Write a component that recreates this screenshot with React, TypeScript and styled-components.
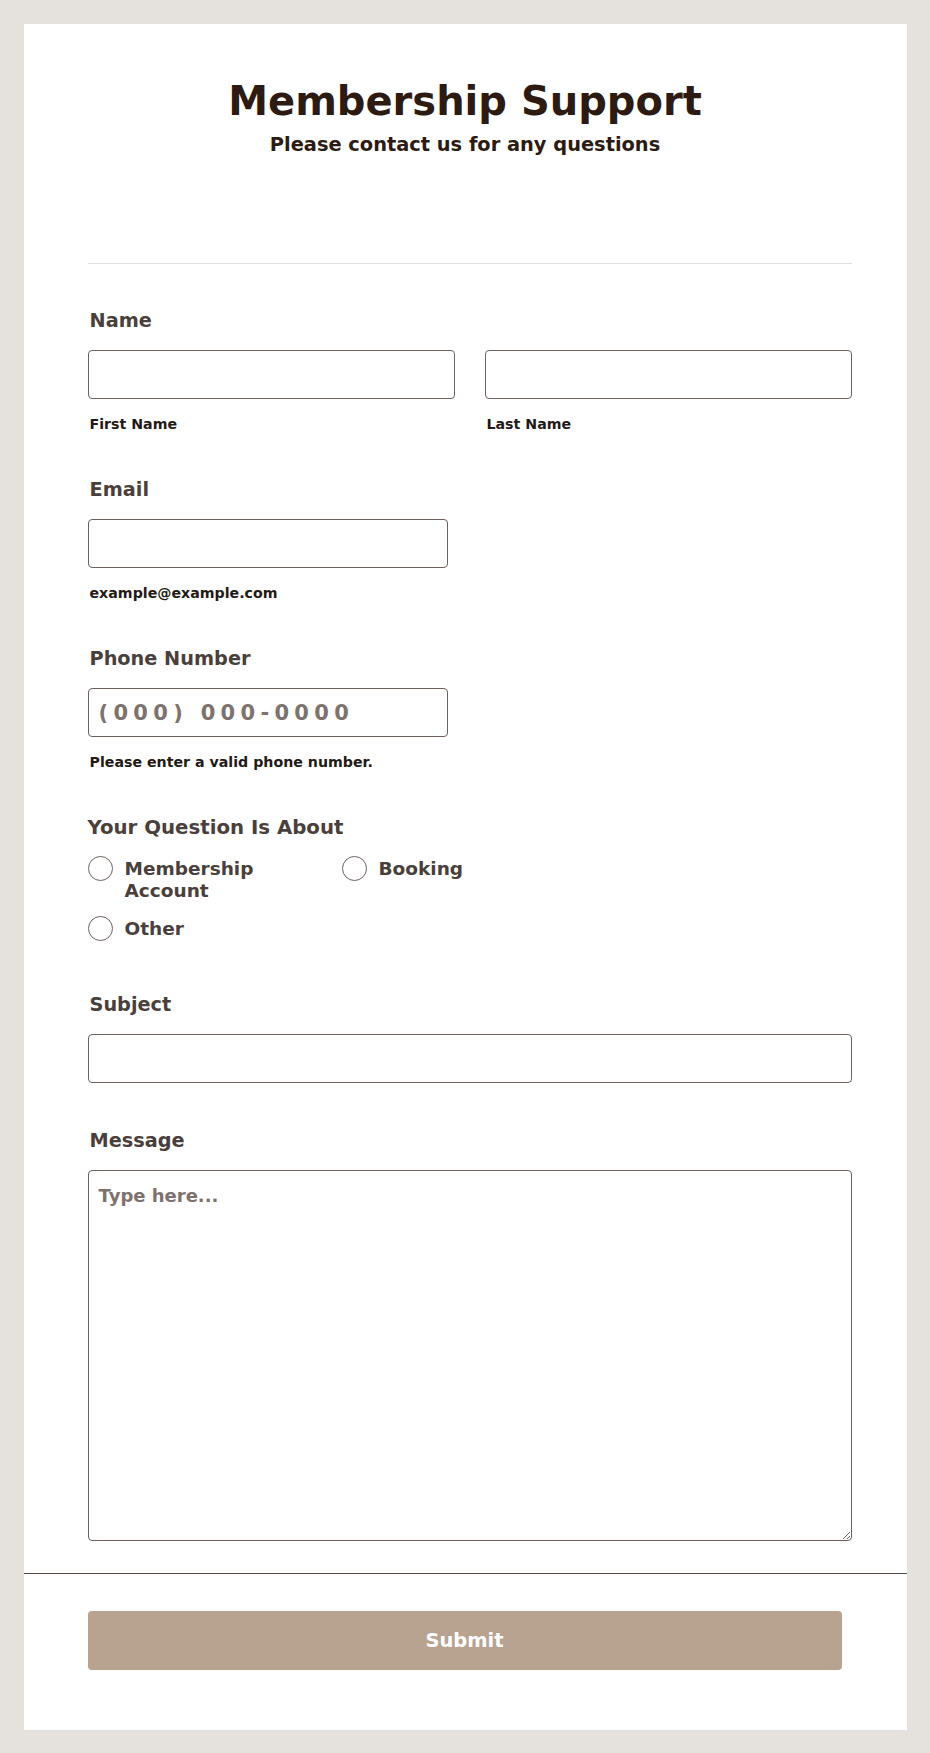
import React from "react";
import styled, { createGlobalStyle } from "styled-components";

const GlobalStyle = createGlobalStyle`
  html, body {
    margin: 0;
    padding: 0;
    background: #e5e1dd;
  }
  body {
    font-family: "DejaVu Sans", "Liberation Sans", sans-serif;
  }
  * { box-sizing: border-box; }
`;

const Page = styled.div`
  padding: 24px 0 24px;
`;

const Card = styled.div`
  width: 883px;
  margin: 0 auto;
  background: #ffffff;
  padding: 54px 0 60px;
`;

const Header = styled.header`
  text-align: center;
`;

const Title = styled.h1`
  margin: 0;
  font-size: 40px;
  line-height: 46px;
  font-weight: 700;
  color: #2d1b12;
`;

const Subtitle = styled.p`
  margin: 10px 0 0;
  font-size: 19.4px;
  line-height: 22px;
  font-weight: 700;
  color: #2d1b12;
`;

const HeaderDivider = styled.hr`
  border: none;
  height: 1px;
  background: #e3dfdc;
  margin: 107px 55px 0 64px;
`;

const Form = styled.form`
  display: flex;
  flex-direction: column;
  gap: 46px;
  padding: 46px 55px 0 64px;
`;

const Field = styled.div<{ $extraTop?: number }>`
  display: flex;
  flex-direction: column;
  margin-top: ${(p) => p.$extraTop ?? 0}px;
`;

const Label = styled.label<{ $flush?: boolean; $size?: number }>`
  display: block;
  font-size: ${(p) => p.$size ?? 19.3}px;
  line-height: 22px;
  font-weight: 700;
  color: #4a3f3b;
  padding-left: ${(p) => (p.$flush ? 0 : 2)}px;
  margin-bottom: 18px;
`;

const NameRow = styled.div`
  display: grid;
  grid-template-columns: 1fr 1fr;
  column-gap: 30px;
`;

const Column = styled.div`
  display: flex;
  flex-direction: column;
`;

const TextInput = styled.input<{ $width?: number }>`
  display: block;
  width: ${(p) => (p.$width ? `${p.$width}px` : "100%")};
  height: 49px;
  border: 1px solid #6d615d;
  border-radius: 4px;
  background: #fff;
  padding: 0 10px;
  font-family: "DejaVu Sans", sans-serif;
  font-size: 21px;
  font-weight: 700;
  letter-spacing: 5.3px;
  color: #2d1b12;
  outline: none;
  &::placeholder {
    color: #7d726d;
  }
`;

const SubLabel = styled.span`
  display: block;
  margin-top: 17px;
  padding-left: 2px;
  font-size: 14.2px;
  line-height: 17px;
  font-weight: 700;
  color: #231a16;
`;

const RadioGrid = styled.div`
  display: grid;
  grid-template-columns: 254px 254px;
  row-gap: 16px;
  margin-top: 1px;
  margin-bottom: 7px;
`;

const RadioItem = styled.label`
  display: flex;
  align-items: flex-start;
  gap: 12px;
  cursor: pointer;
`;

const RadioCircle = styled.span`
  flex-shrink: 0;
  width: 25px;
  height: 25px;
  margin-top: -2px;
  border: 1.5px solid #6d625e;
  border-radius: 50%;
  background: #fff;
`;

const RadioText = styled.span`
  max-width: 180px;
  font-size: 18.5px;
  line-height: 22px;
  font-weight: 700;
  color: #4a3f3b;
`;

const MessageArea = styled.textarea`
  display: block;
  width: 100%;
  height: 371px;
  border: 1px solid #6d615d;
  border-radius: 4px;
  padding: 14px 10px;
  font-family: "DejaVu Sans", sans-serif;
  font-size: 18px;
  line-height: 22px;
  font-weight: 700;
  color: #2d1b12;
  resize: both;
  outline: none;
  &::placeholder {
    color: #7d726d;
  }
`;

const FooterDivider = styled.hr`
  border: none;
  height: 1px;
  background: #5a4a45;
  margin: 32px 0 0;
`;

const SubmitButton = styled.button`
  display: block;
  width: 754px;
  height: 59px;
  margin: 37px 0 0 64px;
  border: none;
  border-radius: 4px;
  background: #b8a290;
  color: #ffffff;
  font-family: "DejaVu Sans", sans-serif;
  font-size: 19.5px;
  font-weight: 700;
  cursor: pointer;
`;

export default function App() {
  return (
    <>
      <GlobalStyle />
      <Page>
        <Card>
          <Header>
            <Title>Membership Support</Title>
            <Subtitle>Please contact us for any questions</Subtitle>
          </Header>
          <HeaderDivider />
          <Form onSubmit={(e) => e.preventDefault()}>
            <Field>
              <Label>Name</Label>
              <NameRow>
                <Column>
                  <TextInput type="text" aria-label="First Name" />
                  <SubLabel>First Name</SubLabel>
                </Column>
                <Column>
                  <TextInput type="text" aria-label="Last Name" />
                  <SubLabel>Last Name</SubLabel>
                </Column>
              </NameRow>
            </Field>

            <Field>
              <Label>Email</Label>
              <TextInput type="email" $width={360} aria-label="Email" />
              <SubLabel>example@example.com</SubLabel>
            </Field>

            <Field>
              <Label>Phone Number</Label>
              <TextInput type="tel" $width={360} placeholder="(000) 000-0000" />
              <SubLabel>Please enter a valid phone number.</SubLabel>
            </Field>

            <Field>
              <Label $flush $size={19.75}>Your Question Is About</Label>
              <RadioGrid>
                <RadioItem>
                  <RadioCircle />
                  <RadioText>Membership Account</RadioText>
                </RadioItem>
                <RadioItem>
                  <RadioCircle />
                  <RadioText>Booking</RadioText>
                </RadioItem>
                <RadioItem>
                  <RadioCircle />
                  <RadioText>Other</RadioText>
                </RadioItem>
              </RadioGrid>
            </Field>

            <Field>
              <Label>Subject</Label>
              <TextInput type="text" aria-label="Subject" />
            </Field>

            <Field $extraTop={1}>
              <Label>Message</Label>
              <MessageArea placeholder="Type here..." />
            </Field>
          </Form>
          <FooterDivider />
          <SubmitButton type="submit">Submit</SubmitButton>
        </Card>
      </Page>
    </>
  );
}
